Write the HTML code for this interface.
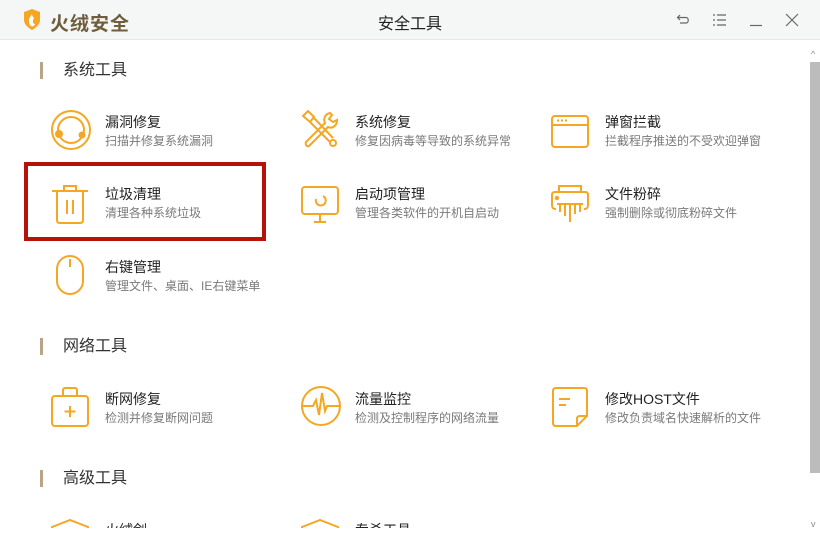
<!DOCTYPE html>
<html><head><meta charset="utf-8"><style>
*{margin:0;padding:0;box-sizing:border-box}
body{width:820px;height:540px;overflow:hidden;background:#fff;font-family:"Liberation Sans","Noto Sans CJK SC",sans-serif;position:relative}
.hdr{position:absolute;left:0;top:0;width:820px;height:40px;background:#f5f6f6;border-bottom:1px solid #e6e8e8}
.logo{position:absolute;left:50px;top:9px;font-size:19px;font-weight:bold;color:#6e5e3e;letter-spacing:1px}
.title{position:absolute;left:0;width:820px;top:10px;text-align:center;font-size:16px;color:#222}
.sec{position:absolute;left:40px;font-size:16px;color:#333;padding-left:20px;border-left:3px solid #bba386;line-height:17px}
.it{position:absolute}
.it b{position:absolute;left:0;top:0;font-weight:normal;font-size:14px;color:#222;white-space:nowrap}
.it i{position:absolute;left:0;top:20px;font-style:normal;font-size:12px;color:#7a7a7a;white-space:nowrap}
svg.ic{position:absolute}
.clip{position:absolute;left:0;top:40px;width:808px;height:488px;overflow:hidden}
</style></head><body>
<div class="hdr">
<svg style="position:absolute;left:22px;top:9px" width="20" height="22" viewBox="0 0 20 22"><path d="M2 3 L10 0 L18 3 L18 11 C18 17 10 21 10 21 C10 21 2 17 2 11Z" fill="#f5a623"/><path d="M10 5 C7 9 6 12 8 16 C9 18 12 18 13 15 C11 15 10 12 12 9 C11 8 10 7 10 5Z" fill="#fff"/></svg>
<div class="logo">火绒安全</div>
<div class="title">安全工具</div>
<svg style="position:absolute;left:676px;top:12px" width="16" height="16" viewBox="0 0 16 16" fill="none" stroke="#666" stroke-width="1.2"><path d="M4 3 L1.5 5.5 L4 8 M1.5 5.5 H10 C13 5.5 13 11 10 11 H4"/></svg>
<svg style="position:absolute;left:712px;top:13px" width="16" height="14" viewBox="0 0 16 14" stroke="#666" stroke-width="1.2"><path d="M1 2H3M5 2H14M1 7H3M5 7H14M1 12H3M5 12H14"/></svg>
<svg style="position:absolute;left:748px;top:13px" width="16" height="14" viewBox="0 0 16 14" stroke="#666" stroke-width="1.2"><path d="M2 12.5H14"/></svg>
<svg style="position:absolute;left:785px;top:13px" width="14" height="14" viewBox="0 0 14 14" stroke="#666" stroke-width="1.2"><path d="M1 1L13 13M13 1L1 13"/></svg>
</div>
<div class="clip">
<div class="sec" style="top:22px">系统工具</div>
<svg class="ic" style="left:50px;top:69px" width="42" height="42" viewBox="0 0 42 42" fill="none" stroke="#f5a623" stroke-width="2"><circle cx="21" cy="21" r="19"/><circle cx="21" cy="21" r="13"/><circle cx="9" cy="25" r="3" fill="#f5a623"/><circle cx="32" cy="26" r="2.5" fill="#f5a623"/></svg>
<div class="it" style="left:105px;top:72px"><b>漏洞修复</b><i>扫描并修复系统漏洞</i></div>
<svg class="ic" style="left:300px;top:70px" width="40" height="40" viewBox="0 0 40 40" fill="none" stroke="#f5a623" stroke-width="2"><path d="M3 6 L8 1 L14 7 L10 12 Z M10 12 L30 32 M14 8 L33 28"/><circle cx="33" cy="33" r="3"/><path d="M30 3 C25 4 23 9 25 13 L6 32 C5 35 7 37 9 36 L28 17 C32 19 37 16 37 10 L33 12 L29 9 L32 5 Z"/></svg>
<div class="it" style="left:355px;top:72px"><b>系统修复</b><i>修复因病毒等导致的系统异常</i></div>
<svg class="ic" style="left:551px;top:75px" width="38" height="34" viewBox="0 0 38 34" fill="none" stroke="#f5a623" stroke-width="2"><rect x="1" y="1" width="36" height="31" rx="3"/><path d="M1 10H37"/><path d="M6 5.5H8M10 5.5H12M14 5.5H16" stroke-width="2"/></svg>
<div class="it" style="left:605px;top:72px"><b>弹窗拦截</b><i>拦截程序推送的不受欢迎弹窗</i></div>
<svg class="ic" style="left:51px;top:144px" width="38" height="40" viewBox="0 0 38 40" fill="none" stroke="#f5a623" stroke-width="2"><path d="M1 7H37M13 7V2H25V7M6 7V36C6 38 7 39 9 39H29C31 39 32 38 32 36V7M16 16V30M22 16V30"/></svg>
<div class="it" style="left:105px;top:144px"><b>垃圾清理</b><i>清理各种系统垃圾</i></div>
<svg class="ic" style="left:301px;top:146px" width="38" height="38" viewBox="0 0 38 38" fill="none" stroke="#f5a623" stroke-width="2"><rect x="1" y="1" width="36" height="27" rx="3"/><path d="M13 36H25M19 28V36" /><path d="M15 13 A5 5 0 1 0 22 10" /></svg>
<div class="it" style="left:355px;top:144px"><b>启动项管理</b><i>管理各类软件的开机自启动</i></div>
<svg class="ic" style="left:551px;top:144px" width="38" height="40" viewBox="0 0 38 40" fill="none" stroke="#f5a623" stroke-width="2"><path d="M8 8V2H30V8M5 25C2 25 1 24 1 21V11C1 9 2 8 4 8H34C36 8 37 9 37 11V21C37 24 36 25 33 25M6 20H32M9 20V28M14 20V32M19 20V38M24 20V30M29 20V28"/><circle cx="6" cy="14" r="1.2" fill="#f5a623"/></svg>
<div class="it" style="left:605px;top:144px"><b>文件粉碎</b><i>强制删除或彻底粉碎文件</i></div>
<svg class="ic" style="left:56px;top:215px" width="28" height="40" viewBox="0 0 28 40" fill="none" stroke="#f5a623" stroke-width="2"><rect x="1" y="1" width="26" height="38" rx="13"/><path d="M14 4V12"/></svg>
<div class="it" style="left:105px;top:217px"><b>右键管理</b><i>管理文件、桌面、IE右键菜单</i></div>
<div class="sec" style="top:298px">网络工具</div>
<svg class="ic" style="left:51px;top:347px" width="38" height="40" viewBox="0 0 38 40" fill="none" stroke="#f5a623" stroke-width="2"><rect x="1" y="9" width="36" height="30" rx="3"/><path d="M12 9V3C12 2 13 1 14 1H24C25 1 26 2 26 3V9M19 19V30M13.5 24.5H24.5"/></svg>
<div class="it" style="left:105px;top:349px"><b>断网修复</b><i>检测并修复断网问题</i></div>
<svg class="ic" style="left:300px;top:345px" width="42" height="42" viewBox="0 0 42 42" fill="none" stroke="#f5a623" stroke-width="2"><circle cx="21" cy="21" r="19"/><path d="M2 21H13L16 15L19 30L22 8L25 26L27 21H40"/></svg>
<div class="it" style="left:355px;top:349px"><b>流量监控</b><i>检测及控制程序的网络流量</i></div>
<svg class="ic" style="left:552px;top:347px" width="36" height="40" viewBox="0 0 36 40" fill="none" stroke="#f5a623" stroke-width="2"><path d="M25 39H4C2 39 1 38 1 36V4C1 2 2 1 4 1H32C34 1 35 2 35 4V29L25 39ZM25 39V32C25 30 26 29 28 29H35M7 12H18M7 18H14"/></svg>
<div class="it" style="left:605px;top:349px"><b>修改HOST文件</b><i>修改负责域名快速解析的文件</i></div>
<div class="sec" style="top:430px">高级工具</div>
<svg class="ic" style="left:51px;top:479px" width="38" height="40" viewBox="0 0 38 40" fill="none" stroke="#f5a623" stroke-width="2"><path d="M1 8L19 1L37 8V30L19 39L1 30Z"/></svg>
<div class="it" style="left:105px;top:480px"><b>火绒剑</b></div>
<svg class="ic" style="left:301px;top:479px" width="38" height="40" viewBox="0 0 38 40" fill="none" stroke="#f5a623" stroke-width="2"><path d="M1 8L19 1L37 8V30L19 39L1 30Z"/></svg>
<div class="it" style="left:355px;top:480px"><b>专杀工具</b></div>
</div>
<div style="position:absolute;left:24px;top:162px;width:242px;height:79px;border:4px solid #b5120a"></div>
<div style="position:absolute;left:810px;top:62px;width:10px;height:411px;background:#bcbcbc"></div>
<div style="position:absolute;left:811px;top:49px;font-size:9px;color:#888">^</div>
<div style="position:absolute;left:811px;top:519px;font-size:9px;color:#888">v</div>
</body></html>
